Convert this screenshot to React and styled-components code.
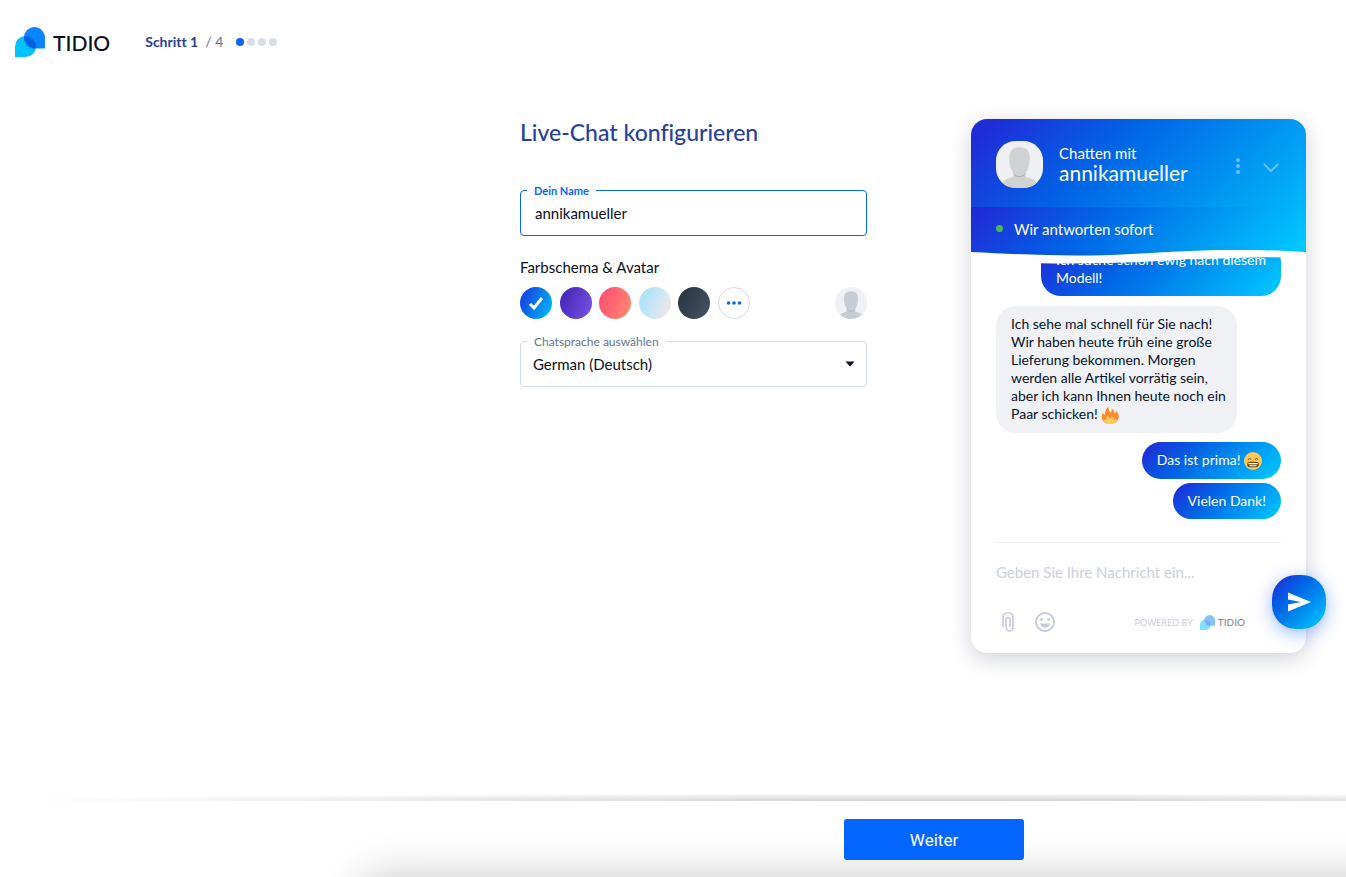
import React, { useState } from 'react';

import styled, { createGlobalStyle, css } from 'styled-components';

const GlobalStyle = createGlobalStyle`
  * {
    box-sizing: border-box;
  }

  body {
    margin: 0;
    background-color: #fff;
    color: #080f1a;
    font-family: Lato, 'Open Sans', sans-serif;
    font-variant-ligatures: none;
  }

  button, input, select {
    font-family: inherit;
    margin: 0;
  }
`;

const gradient = css`
  background-image: linear-gradient(135deg, #1f2dd9 4%, #0067e6 38%, #00c8ff 98%);
`;

const Page = styled.div`
  min-height: 100vh;
  display: flex;
  flex-direction: column;
`;

/* top bar */

const Header = styled.header`
  display: flex;
  align-items: center;
  padding: 26px 15px 0;
  height: 58px;
`;

const Logo = styled.a`
  display: flex;
  align-items: center;
  gap: ${(props) => (props.$small ? '3px' : '8px')};
  color: #080f1a;
  font-size: ${(props) => (props.$small ? '10px' : '21px')};
  font-weight: 500;
  line-height: 1;
  text-decoration: none;
  opacity: ${(props) => (props.$small ? 0.5 : 1)};
`;

const Steps = styled.div`
  display: flex;
  align-items: center;
  margin-left: 35px;
  font-size: 14px;
  line-height: 16px;
  color: #647491;
`;

const Current = styled.strong`
  color: #27419a;
  margin-right: 7px;
`;

const Dots = styled.div`
  display: flex;
  gap: 3px;
  margin-left: 13px;
`;

const Dot = styled.span`
  width: 8px;
  height: 8px;
  border-radius: 50%;
  background-color: ${(props) => (props.$active ? '#0566ff' : '#d8dee7')};
`;

/* form */

const Main = styled.main`
  flex: 1;
  display: flex;
  justify-content: flex-end;
  align-items: flex-start;
  gap: 104px;
  padding: 61px 40px 40px;
`;

const Form = styled.form`
  width: 347px;
  display: flex;
  flex-direction: column;
`;

const Title = styled.h1`
  margin: 0 0 45px;
  font-size: 23px;
  line-height: 26px;
  font-weight: 500;
  color: #27419a;
`;

const Field = styled.div`
  position: relative;
  height: 46px;
`;

const FieldLabel = styled.label`
  position: absolute;
  top: -6px;
  left: 7px;
  padding: 0 7px;
  background-color: #fff;
  font-size: ${(props) => (props.$active ? '11px' : '12px')};
  line-height: 14px;
  font-weight: ${(props) => (props.$active ? 700 : 400)};
  color: ${(props) => (props.$active ? '#0566ff' : '#647491')};
`;

const control = css`
  width: 100%;
  height: 46px;
  border-radius: 4px;
  outline: none;
  background-color: transparent;
  color: #080f1a;
  font-size: 15px;
`;

const TextInput = styled.input`
  ${control}
  border: 1px solid #0566ff;
  padding: 0 14px;
`;

const Select = styled.select`
  ${control}
  appearance: none;
  border: 1px solid #d3dbe5;
  padding: 0 12px;
`;

const Caret = styled.svg`
  position: absolute;
  right: 12px;
  top: 20px;
  pointer-events: none;
`;

const Caption = styled.div`
  margin: 21px 0 10px;
  font-size: 15px;
  line-height: 20px;
`;

const Scheme = styled.div`
  display: flex;
  justify-content: space-between;
  margin-bottom: 22px;
`;

const Swatches = styled.div`
  display: flex;
  justify-content: space-between;
  width: 230px;
`;

const Swatch = styled.label`
  display: grid;
  place-items: center;
  width: 32px;
  height: 32px;
  border-radius: 50%;
  background-image: ${(props) => props.$fill};
  cursor: pointer;
`;

const SwatchInput = styled.input`
  appearance: none;
  width: 0;
  height: 0;
  margin: 0;
  grid-area: 1 / 1;
`;

const Check = styled.svg`
  grid-area: 1 / 1;
`;

const plainButton = css`
  display: grid;
  place-items: center;
  padding: 0;
  border: 0;
  background: none;
  cursor: pointer;
`;

const MoreButton = styled.button`
  ${plainButton}
  width: 32px;
  height: 32px;
  border: 1px solid #d3dbe5;
  border-radius: 50%;
`;

const IconButton = styled.button`
  ${plainButton}
`;

/* chat preview */

const Chat = styled.section`
  position: relative;
  width: 335px;
  border-radius: 16px;
  background-color: #fff;
  box-shadow: 0 6px 22px rgba(0, 18, 46, 0.19);
  font-variant-ligatures: normal;
`;

const ChatHead = styled.div`
  display: flex;
  align-items: center;
  height: 88px;
  padding: 2px 25px 0;
  border-radius: 16px 16px 0 0;
  background-image: linear-gradient(135deg, #1f2dd9 6%, #0067e6 42%, #00c8ff 112%);
  color: #fff;
`;

const ChatTitle = styled.div`
  flex: 1;
  margin-left: 16px;
  font-size: 15px;
  line-height: 18px;
`;

const ChatName = styled.div`
  font-size: 21px;
  line-height: 22px;
`;

const HeadActions = styled.div`
  display: flex;
  align-items: center;
  gap: 13px;
  padding-top: 4px;
`;

const Status = styled.div`
  ${gradient}
  position: relative;
  z-index: 1;
  display: flex;
  align-items: center;
  gap: 11px;
  height: 43px;
  padding: 0 25px;
  color: #fff;
  font-size: 15px;
  line-height: 20px;
`;

const Online = styled.span`
  width: 7px;
  height: 7px;
  border-radius: 50%;
  background-color: #4fb84f;
`;

const Wave = styled.svg`
  position: absolute;
  left: 0;
  top: 100%;
  width: 100%;
  height: 14px;
`;

const Messages = styled.div`
  display: flex;
  flex-direction: column;
  justify-content: flex-end;
  height: 293px;
  margin: 0 25px;
  padding-bottom: 23px;
  border-bottom: 1px solid #ecedf0;
  overflow: hidden;
`;

const Bubble = styled.div`
  flex: none;
  padding: 9px 15px;
  border-radius: 20px;
  font-size: 14px;
  line-height: 18px;
  ${(props) =>
    props.$visitor
      ? css`
          ${gradient}
          align-self: flex-end;
          margin-top: ${props.$follow ? '4px' : '9px'};
          color: #fff;
        `
      : css`
          width: 241px;
          margin-top: 10px;
          padding-right: 6px;
          background-color: #f0f1f5;
          color: #06132b;
        `}
`;

const FirstBubble = styled(Bubble)`
  width: 240px;
`;

const Emoji = styled.svg`
  margin-right: 4px;
  vertical-align: -5px;
`;

const Composer = styled.div`
  padding: 18px 25px 20px;
`;

const MessageInput = styled.input`
  width: 100%;
  height: 22px;
  padding: 0;
  border: 0;
  outline: none;
  font-size: 15px;

  &::placeholder {
    color: #cbcfdb;
    opacity: 1;
  }
`;

const Tools = styled.div`
  display: flex;
  align-items: center;
  gap: 18px;
  height: 22px;
  margin-top: 28px;
  padding: 0 36px 0 3px;
`;

const Powered = styled.div`
  display: flex;
  align-items: center;
  gap: 7px;
  margin-left: auto;
  font-size: 9px;
  color: #cbcfdb;
`;

const SendButton = styled.button`
  ${plainButton}
  ${gradient}
  position: absolute;
  right: -20px;
  bottom: 24px;
  width: 54px;
  height: 54px;
  border-radius: 24px;
  box-shadow: 0 4px 18px rgba(0, 77, 255, 0.4);
`;

/* bottom bar */

const Footer = styled.footer`
  position: relative;
  display: flex;
  justify-content: center;
  padding: 18px 0 17px 522px;
`;

const TopShade = styled.div`
  position: absolute;
  left: 45px;
  right: 0;
  bottom: 100%;
  height: 7px;
  background-image: radial-gradient(950px 8px at 890px 100%, rgba(0, 0, 0, 0.18), transparent);
`;

const BottomShade = styled.div`
  position: absolute;
  inset: 0;
  overflow: hidden;

  &::after {
    content: '';
    position: absolute;
    top: 100%;
    left: 360px;
    right: -60px;
    height: 60px;
    border-radius: 20px;
    box-shadow: 0 0 44px rgba(0, 0, 0, 0.22);
  }
`;

const NextButton = styled.button`
  position: relative;
  width: 180px;
  height: 41px;
  border: 0;
  border-radius: 3px;
  background-color: #0566ff;
  color: #fff;
  font-family: Roboto, sans-serif;
  font-size: 17px;
  cursor: pointer;
`;

const LogoMark = ({ size }) => (
  <svg width={size} height={size} viewBox="0 0 30 30" aria-hidden="true">
    <path d="M0 30V19.500A10.500 10.500 0 0 1 10.500 9H21V19.500A10.500 10.500 0 0 1 10.500 30Z" fill="#00c2ff" />
    <path d="M30 21.500V11A11 11 0 0 0 19 0A10.500 10.500 0 0 0 9 10.500A11 11 0 0 0 20 21.500Z" fill="#0a84ff" />
    <path d="M9 9.200H10.500A10.500 10.500 0 0 1 21 19.500V21.500H20A11 11 0 0 1 9 10.500Z" fill="#0062e0" />
  </svg>
);

const Avatar = ({ size, round, shade, back, label }) => (
  <svg width={size} height={size} viewBox="0 0 48 48" role="img" aria-label={label}>
    <clipPath id={`avatar-${size}`}>
      <rect width="48" height="48" rx={round} />
    </clipPath>
    <g clipPath={`url(#avatar-${size})`}>
      <rect width="48" height="48" fill={back} />
      <path d="M3 48C6 40 12 38 17 37L19 31H29L31 37C36 38 42 40 45 48Z" fill={shade} />
      <path
        d="M24 6.500C16 6.500 13.500 11 13.500 18C13.500 26 16.500 35.500 24 35.500S34.500 26 34.500 18C34.500 11 32 6.500 24 6.500Z"
        fill={shade}
      />
      <path d="M18 33C20 37.500 28 37.500 30 33" fill="none" stroke="#a9acb2" strokeWidth="1" />
    </g>
  </svg>
);

const Fire = () => (
  <Emoji width="18" height="18" viewBox="0 0 18 18" role="img" aria-label="Feuer">
    <path
      d="M2 6.500C2.500 8 3 8.500 4 8.500C4 6 4.500 3 7.500 0.500C7.500 3 8 5 9.500 6.500C10.500 5.500 11 4 10.800 2.500C13 4 13.500 6 13.500 8C14.500 7.500 15 6.500 14.800 4.500C18.500 8 18.500 12 16 15C14.500 17 12 18 9 18S3.500 17 1.800 14.500C0 12 0.500 9 2 6.500Z"
      fill="#ff8c2b"
    />
    <path
      d="M9 18C5.500 18 2.800 16.300 2.500 13.800C3.500 14.300 4.500 14 5 13C5 11.500 6 10.200 7.300 9.200C7.300 11 8.200 12.200 9.500 12.200C10.500 11.800 11 11 11 10.200C12.300 11 12.800 12 13 13.200C14 13.700 15 13.500 15.800 13C15.500 16 12.500 18 9 18Z"
      fill="#ffcb5c"
    />
  </Emoji>
);

const Grin = () => (
  <Emoji width="18" height="18" viewBox="0 0 18 18" role="img" aria-label="Grinsen">
    <circle cx="9" cy="9" r="9" fill="#ffc95a" />
    <path d="M4 7.500Q5.500 5.500 7.200 7.500M10.800 7.500Q12.500 5.500 14 7.500" fill="none" stroke="#6e4a12" strokeWidth="1" />
    <rect x="3.200" y="9.800" width="11.600" height="5.400" rx="2.700" fill="#6e4a12" />
    <path d="M4.300 11H13.700V12.200H4.300ZM5.500 13.200H12.500V14.200H5.500Z" fill="#fff" />
  </Emoji>
);

const schemes = [
  { name: 'Blau', fill: 'linear-gradient(115deg, #1433dc, #00c0ff)' },
  { name: 'Violett', fill: 'linear-gradient(115deg, #4425b8 10%, #7a55e6)' },
  { name: 'Koralle', fill: 'linear-gradient(115deg, #ff5672 20%, #ff8f70)' },
  { name: 'Hellblau', fill: 'linear-gradient(115deg, #b0e4f9 25%, #fbe8e8)' },
  { name: 'Dunkel', fill: 'linear-gradient(115deg, #2d3943 20%, #475266)' },
];

const App = () => {
  const [name, setName] = useState('annikamueller');
  const [scheme, setScheme] = useState('Blau');

  return (
    <Page>
      <GlobalStyle />
      <Header>
        <Logo href="#">
          <LogoMark size={30} />
          TIDIO
        </Logo>
        <Steps>
          <Current>Schritt 1</Current>/ 4
          <Dots>
            <Dot $active />
            <Dot />
            <Dot />
            <Dot />
          </Dots>
        </Steps>
      </Header>

      <Main>
        <Form id="setup" onSubmit={(e) => e.preventDefault()}>
          <Title>Live-Chat konfigurieren</Title>
          <Field>
            <TextInput id="name" value={name} onChange={(e) => setName(e.target.value)} />
            <FieldLabel htmlFor="name" $active>
              Dein Name
            </FieldLabel>
          </Field>
          <Caption>Farbschema &amp; Avatar</Caption>
          <Scheme>
            <Swatches>
              {schemes.map((item) => (
                <Swatch key={item.name} $fill={item.fill}>
                  <SwatchInput
                    type="radio"
                    name="scheme"
                    aria-label={item.name}
                    checked={scheme === item.name}
                    onChange={() => setScheme(item.name)}
                  />
                  {scheme === item.name && (
                    <Check width="16" height="14" viewBox="0 0 16 14">
                      <path d="M2 8L6 12L14 2" fill="none" stroke="#fff" strokeWidth="3" />
                    </Check>
                  )}
                </Swatch>
              ))}
              <MoreButton type="button" aria-label="Weitere Farben">
                <svg width="16" height="4" viewBox="0 0 16 4" fill="#0566ff">
                  <circle cx="2.500" cy="2" r="1.800" />
                  <circle cx="8" cy="2" r="1.800" />
                  <circle cx="13.500" cy="2" r="1.800" />
                </svg>
              </MoreButton>
            </Swatches>
            <IconButton type="button" aria-label="Avatar">
              <Avatar size={32} round={24} shade="#c8ccd5" back="#f0f1f5" label="Avatar" />
            </IconButton>
          </Scheme>
          <Field>
            <Select id="language" defaultValue="de">
              <option value="de">German (Deutsch)</option>
              <option value="en">English</option>
            </Select>
            <FieldLabel htmlFor="language">Chatsprache auswählen</FieldLabel>
            <Caret width="10" height="6" viewBox="0 0 10 6">
              <path d="M0.500 0.500H9.500L5 5.500Z" fill="#080f1a" />
            </Caret>
          </Field>
        </Form>

        <Chat>
          <ChatHead>
            <Avatar size={47} round={20} shade="#d0d2d3" back="#eff0f2" label={name} />
            <ChatTitle>
              Chatten mit
              <ChatName>{name}</ChatName>
            </ChatTitle>
            <HeadActions>
              <IconButton type="button" aria-label="Optionen">
                <svg width="20" height="20" viewBox="0 0 20 20" fill="#fff" opacity="0.4">
                  <circle cx="10" cy="4" r="2" />
                  <circle cx="10" cy="10" r="2" />
                  <circle cx="10" cy="16" r="2" />
                </svg>
              </IconButton>
              <IconButton type="button" aria-label="Minimieren">
                <svg width="20" height="20" viewBox="0 0 20 20" opacity="0.4">
                  <path d="M3 8L10 15L17 8" fill="none" stroke="#fff" strokeWidth="2" />
                </svg>
              </IconButton>
            </HeadActions>
          </ChatHead>
          <Status>
            <Online />
            Wir antworten sofort
            <Wave viewBox="0 0 335 14" preserveAspectRatio="none">
              <defs>
                <linearGradient id="wave">
                  <stop offset="0" stopColor="#0d43df" />
                  <stop offset="0.300" stopColor="#005fe4" />
                  <stop offset="1" stopColor="#00c8ff" />
                </linearGradient>
              </defs>
              <path d="M0 0H335V8C300 6 275 8 220 9C160 13 110 15 0 12Z" fill="#fff" />
              <path d="M0 0H335V2C255 -3 205 2 160 4C105 7 60 5 0 2Z" fill="url(#wave)" />
            </Wave>
          </Status>
          <Messages>
            <FirstBubble $visitor>Ich suche schon ewig nach diesem Modell!</FirstBubble>
            <Bubble>
              Ich sehe mal schnell für Sie nach! Wir haben heute früh eine große Lieferung bekommen. Morgen werden alle
              Artikel vorrätig sein, aber ich kann Ihnen heute noch ein Paar schicken! <Fire />
            </Bubble>
            <Bubble $visitor>
              Das ist prima! <Grin />
            </Bubble>
            <Bubble $visitor $follow>
              Vielen Dank!
            </Bubble>
          </Messages>
          <Composer>
            <MessageInput aria-label="Nachricht" placeholder="Geben Sie Ihre Nachricht ein..." />
            <Tools>
              <IconButton type="button" aria-label="Datei anhängen">
                <svg width="18" height="20" viewBox="0 0 18 20" fill="none" stroke="#c5cad8" strokeWidth="1.600">
                  <path d="M4 15V5.500A5 4.700 0 0 1 14 5.500V14.500A3.500 4.500 0 0 1 7 14.500V7.500A2 2 0 0 1 11 7.500V15" />
                </svg>
              </IconButton>
              <IconButton type="button" aria-label="Emoji einfügen">
                <svg width="20" height="20" viewBox="0 0 20 20" fill="#c5cad8">
                  <circle cx="10" cy="10" r="9" fill="none" stroke="#c5cad8" strokeWidth="1.800" />
                  <circle cx="6.500" cy="7.500" r="1.400" />
                  <circle cx="13.500" cy="7.500" r="1.400" />
                  <path d="M5 11.500H15C14 17 6 17 5 11.500Z" />
                </svg>
              </IconButton>
              <Powered>
                POWERED BY
                <Logo href="#" $small>
                  <LogoMark size={15} />
                  TIDIO
                </Logo>
              </Powered>
            </Tools>
          </Composer>
          <SendButton type="button" aria-label="Senden">
            <svg width="24" height="20" viewBox="0 0 24 20">
              <path d="M1 0.500L24 10L1 19.500V12.500L14 10L1 7.500Z" fill="#fff" />
            </svg>
          </SendButton>
        </Chat>
      </Main>

      <Footer>
        <TopShade />
        <BottomShade />
        <NextButton type="submit" form="setup">
          Weiter
        </NextButton>
      </Footer>
    </Page>
  );
};

export default App;
